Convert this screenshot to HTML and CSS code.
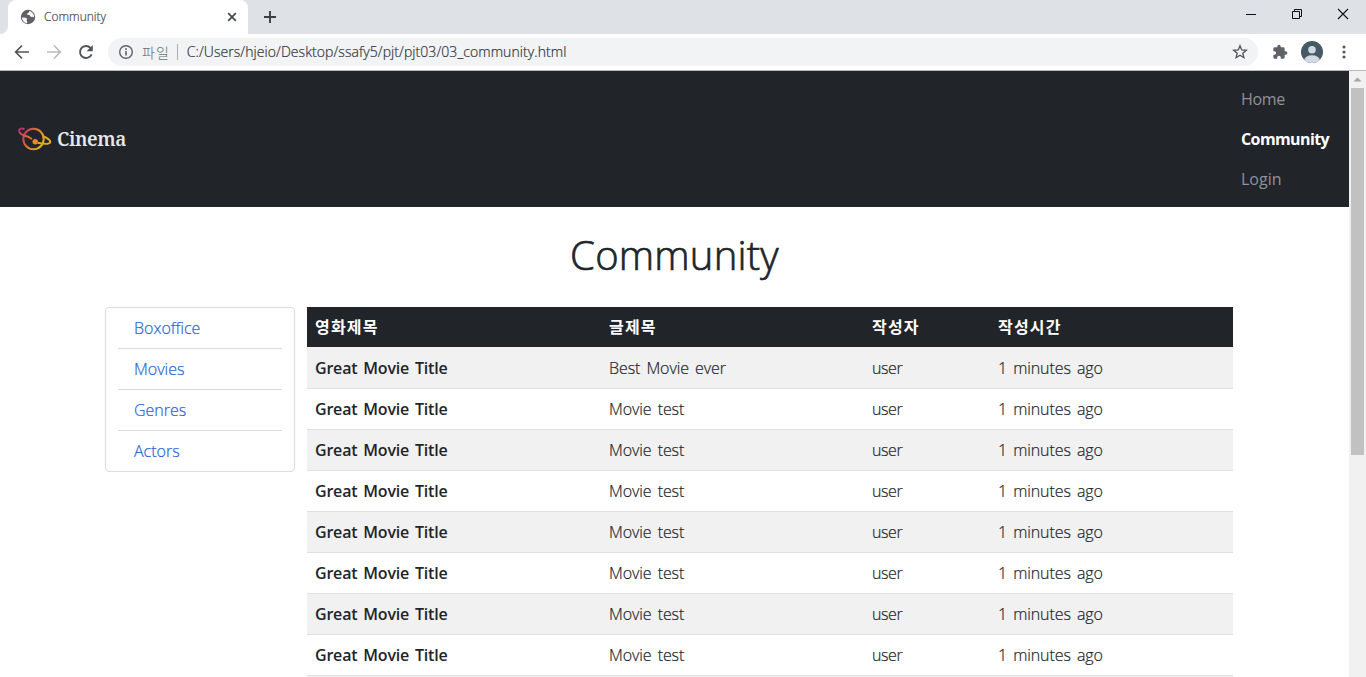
FILE: index.html
```html
<!DOCTYPE html>
<html lang="ko">
<head>
<meta charset="utf-8">
<title>Community</title>
<link rel="stylesheet" href="styles.css">
</head>
<body>
<div class="browser">
  <div class="tabstrip">
    <div class="prev-tab"></div>
    <div class="tab">
      <svg class="globe" width="16" height="16" viewBox="0 0 16 16"><circle cx="8" cy="8" r="7.2" fill="#5f6368"/><path d="M2 8.5l4 .2 1.2 1.6-.7 1.3.9 1.8-.6.9C4 13.600 2 11.500 2 8.500zM9 1.900l.2 1.500-2 .9.100 1.500 2.300.300 1.400 1.900 1.900-.2 1.100.6c.4-3-1.500-5.800-5-6.500z" fill="#fff"/></svg>
      <span class="tab-title">Community</span>
      <svg class="tab-close" width="10" height="10" viewBox="0 0 10 10"><path d="M1.200 1.200l7.600 7.600M8.800 1.200L1.200 8.800" stroke="#45494d" stroke-width="1.700"/></svg>
    </div>
    <svg class="new-tab" width="14" height="14" viewBox="0 0 14 14"><path d="M7 1v12M1 7h12" stroke="#3c4043" stroke-width="1.900"/></svg>
    <div class="window-controls">
      <svg width="12" height="12" viewBox="0 0 12 12"><path d="M1 6.500h10" stroke="#111"/></svg>
      <svg width="12" height="12" viewBox="0 0 12 12"><path d="M1.500 3.500h7v7h-7zM3.500 3.500v-2h7v7h-2" fill="none" stroke="#111"/></svg>
      <svg width="12" height="12" viewBox="0 0 12 12"><path d="M1 1l10 10M11 1L1 11" stroke="#111" stroke-width="1.100"/></svg>
    </div>
  </div>
  <div class="toolbar">
    <svg class="nav-icon" width="16" height="16" viewBox="0 0 16 16"><path d="M15 8H2M8 1.500L1.700 8 8 14.500" fill="none" stroke="#505458" stroke-width="1.700"/></svg>
    <svg class="nav-icon" width="16" height="16" viewBox="0 0 16 16"><path d="M1 8h13M8 1.500L14.300 8 8 14.500" fill="none" stroke="#b9bbbd" stroke-width="1.700"/></svg>
    <svg class="nav-icon" width="16" height="16" viewBox="0 0 16 16"><path d="M13.600 10.300A6 6 0 1 1 12.500 4" fill="none" stroke="#505458" stroke-width="1.900"/><path d="M14.800 1v6.200H8.600z" fill="#505458"/></svg>
    <div class="omnibox">
      <svg width="16" height="16" viewBox="0 0 16 16"><circle cx="8" cy="8" r="6.300" fill="none" stroke="#5f6368" stroke-width="1.400"/><path d="M8 7v4.600M8 4.300v1.600" stroke="#5f6368" stroke-width="1.600"/></svg>
      <span class="scheme">파일</span>
      <span class="divider"></span>
      <span class="url">C:/Users/hjeio/Desktop/ssafy5/pjt/pjt03/03_community.html</span>
      <svg class="star" width="16" height="16" viewBox="0 0 16 16"><path d="M8 1.800l1.700 4.200 4.600.3-3.500 2.900 1.100 4.500L8 11.200l-3.900 2.500 1.100-4.500L1.700 6.300 6.300 6z" fill="none" stroke="#505458" stroke-width="1.300"/></svg>
    </div>
    <svg class="puzzle" width="16" height="16" viewBox="0 0 24 24"><path d="M20.500 11H19V7a2 2 0 0 0-2-2h-4V3.500a2.500 2.500 0 0 0-5 0V5H4a2 2 0 0 0-2 2v3.800h1.500a2.700 2.700 0 0 1 0 5.400H2V20a2 2 0 0 0 2 2h3.800v-1.500a2.700 2.700 0 0 1 5.400 0V22H17a2 2 0 0 0 2-2v-4h1.500a2.500 2.500 0 0 0 0-5z" fill="#5f6368"/></svg>
    <svg class="avatar" width="22" height="22" viewBox="0 0 22 22"><defs><clipPath id="avatar-clip"><circle cx="11" cy="11" r="11"/></clipPath></defs><g clip-path="url(#avatar-clip)"><path d="M0 0h22v22H0z" fill="#455a64"/><circle cx="11" cy="8.700" r="3.800" fill="#cfd8e3"/><ellipse cx="11" cy="19.300" rx="7.800" ry="5" fill="#cfd8e3"/></g></svg>
    <svg class="menu" width="4" height="14" viewBox="0 0 4 14"><g fill="#505458"><circle cx="2" cy="2" r="1.500"/><circle cx="2" cy="7" r="1.500"/><circle cx="2" cy="12" r="1.500"/></g></svg>
  </div>
</div>
<div class="viewport">
  <div class="page">
    <nav class="navbar">
      <a class="brand">
        <svg width="34" height="26" viewBox="0 0 34 26"><defs><linearGradient id="planet" x1="0" y1="0" x2="1" y2=".55"><stop offset="0" stop-color="#b52a7a"/><stop offset=".45" stop-color="#dc6a35"/><stop offset="1" stop-color="#e0b01c"/></linearGradient></defs><g fill="none" stroke="url(#planet)" stroke-width="2"><circle cx="15.500" cy="13" r="10.200"/><path d="M6.500 3C3 2 .5 2.800 1.200 5.300c.7 3.100 5 4.500 8.300 5.200l4.500 2.500M26 10.500c4.500 2 7 4.500 6.100 6-.9 1.500-6.500 1.500-12.600.3"/></g><circle cx="17.200" cy="15.800" r="2.700" fill="#e9872b"/></svg>
        <span class="brand-name">Cinema</span>
      </a>
      <ul class="nav-links">
        <li class="home">Home</li>
        <li class="active">Community</li>
        <li class="login">Login</li>
      </ul>
    </nav>
    <h1 class="title">Community</h1>
    <main class="content">
      <aside class="sidebar">
        <a>Boxoffice</a>
        <a>Movies</a>
        <a>Genres</a>
        <a>Actors</a>
      </aside>
      <section class="board">
        <div class="row head"><span>영화제목</span><span>글제목</span><span>작성자</span><span>작성시간</span></div>
        <div class="row"><b>Great Movie Title</b><span>Best Movie ever</span><span class="user">user</span><span>1 minutes ago</span></div>
        <div class="row"><b>Great Movie Title</b><span>Movie test</span><span class="user">user</span><span>1 minutes ago</span></div>
        <div class="row"><b>Great Movie Title</b><span>Movie test</span><span class="user">user</span><span>1 minutes ago</span></div>
        <div class="row"><b>Great Movie Title</b><span>Movie test</span><span class="user">user</span><span>1 minutes ago</span></div>
        <div class="row"><b>Great Movie Title</b><span>Movie test</span><span class="user">user</span><span>1 minutes ago</span></div>
        <div class="row"><b>Great Movie Title</b><span>Movie test</span><span class="user">user</span><span>1 minutes ago</span></div>
        <div class="row"><b>Great Movie Title</b><span>Movie test</span><span class="user">user</span><span>1 minutes ago</span></div>
        <div class="row"><b>Great Movie Title</b><span>Movie test</span><span class="user">user</span><span>1 minutes ago</span></div>
        <div class="row"></div>
      </section>
    </main>
  </div>
  <div class="scrollbar">
    <svg width="17" height="17" viewBox="0 0 17 17"><path d="M4.500 10.500l4-4 4 4z" fill="#a3a3a3"/></svg>
    <div class="thumb"></div>
  </div>
</div>
</body>
</html>
```

FILE: styles.css
```css
* { box-sizing: border-box; }
body {
  margin: 0;
  height: 677px;
  overflow: hidden;
  display: flex;
  flex-direction: column;
  background: #fff;
  color: #212529;
  font: 16px/24px "Open Sans", "Noto Sans CJK KR", sans-serif;
  white-space: nowrap;
}
svg { display: block; flex: none; }
.browser { height: 71px; flex: none; border-bottom: 1px solid #b8babd; }
.tabstrip { height: 34px; background: #dee1e6; display: flex; align-items: flex-start; }
.prev-tab { width: 8px; height: 34px; background: #fff; flex: none; }
.prev-tab::before { content: ""; display: block; height: 34px; background: #dee1e6; border-radius: 0 0 8px 0; }
.tab {
  width: 240px; height: 34px; flex: none;
  background: #fff; border-radius: 8px 8px 0 0;
  display: flex; align-items: center; padding: 0 11px 0 12px;
}
.tab-title { margin-left: 8px; font-size: 12px; font-weight: 300; color: #45494d; -webkit-text-stroke: .2px; }
.tab-close { margin-left: auto; }
.new-tab { margin: 10px 0 0 15px; }
.window-controls { margin: 8px 17px 0 auto; display: flex; gap: 34px; }
.toolbar { height: 36px; display: flex; align-items: center; padding: 0 20px 0 14px; }
.nav-icon { margin-right: 16px; }
.omnibox {
  width: 1150px; height: 28px; margin-left: -2px; border-radius: 14px; background: #f1f3f4;
  display: flex; align-items: center; padding: 0 10px; font-size: 14px;
}
.scheme { margin-left: 8px; color: #6b6f73; font-weight: 300; font-family: "Noto Sans CJK KR", sans-serif; letter-spacing: 1px; }
.divider { width: 1px; height: 16px; background: #aaadb0; margin: 0 9px 0 7px; }
.url { color: #303338; font-weight: 300; letter-spacing: .07px; -webkit-text-stroke: .2px; }
.star { margin-left: auto; }
.puzzle { margin-left: 14px; }
.avatar { margin-left: 13px; }
.menu { margin-left: auto; }
.viewport { flex: 1; min-height: 0; display: flex; }
.page { width: 1349px; flex: none; overflow: hidden; }
.navbar { height: 136px; background: #212529; display: flex; justify-content: space-between; align-items: center; padding: 0 19px 0 18px; }
.brand { display: flex; align-items: center; gap: 5px; }
.brand-name { color: #e6e8ec; font: 600 19px/26px "Noto Serif", "DejaVu Serif", serif; letter-spacing: -.4px; }
.nav-links { margin: 0; padding: 0; list-style: none; width: 89px; line-height: 40px; color: #909294; }
.home { letter-spacing: -.3px; }
.active { color: #fff; font-weight: 700; letter-spacing: -.6px; }
.title { margin: 24px 0 0; height: 48px; line-height: 48px; font-size: 40px; font-weight: 300; text-align: center; letter-spacing: .2px; -webkit-text-stroke: .7px; }
.content { display: flex; align-items: flex-start; padding: 28px 0 0 105px; gap: 12px; }
.sidebar { width: 190px; height: 165px; border: 1px solid #dadbdd; border-radius: 4px; padding: 0 12px; color: #2563d9; font-weight: 300; -webkit-text-stroke: .2px; }
.sidebar a { display: block; height: 41px; line-height: 41px; padding-left: 16px; border-bottom: 1px solid #dadbdd; }
.sidebar a:last-child { border: 0; }
.board { width: 926px; font-weight: 300; word-spacing: 2px; }
.row { display: grid; grid-template-columns: 294px 263px 126px 1fr; height: 41px; padding-left: 8px; line-height: 40px; border-bottom: 1px solid #dee0e2; letter-spacing: -.08px; }
.row:nth-child(even) { background: #f1f1f1; }
.row.head { background: #212529; background-clip: padding-box; border-color: #f1f1f1; color: #fff; font-weight: 700; font-family: "Noto Sans CJK KR", sans-serif; letter-spacing: 1.2px; line-height: 39px; }
.row > b { font-weight: 600; letter-spacing: -.2px; }
.row:not(.head) > span { -webkit-text-stroke: .2px; }
.row .user { letter-spacing: -.4px; }
.scrollbar { width: 17px; background: #f1f1f1; }
.thumb { width: 13px; height: 367px; margin-left: 2px; background: #c1c1c1; }
```
